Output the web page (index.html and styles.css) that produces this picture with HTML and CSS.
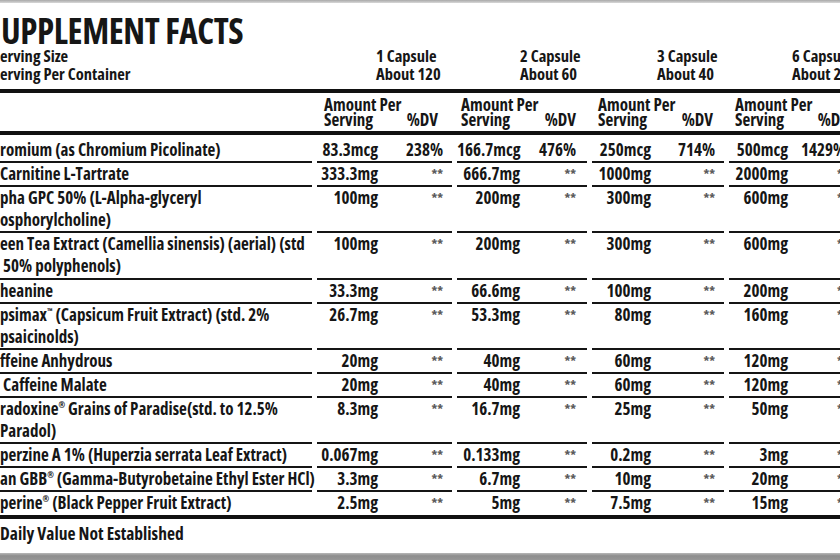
FILE: index.html
```html
<!DOCTYPE html>
<html lang="en">
<head>
<meta charset="utf-8">
<title>Supplement Facts</title>
<link rel="stylesheet" href="styles.css">
</head>
<body>
<div class="band band-top"></div>
<main class="label">
  <h1 class="title">UPPLEMENT FACTS</h1>
  <div class="grid serving">
    <div class="sv-label">erving Size<br>erving Per Container</div>
    <div class="sv-col">1 Capsule<br>About 120</div>
    <div class="sv-col">2 Capsule<br>About 60</div>
    <div class="sv-col">3 Capsule<br>About 40</div>
    <div class="sv-col">6 Capsule<br>About 20</div>
  </div>
  <div class="rule"></div>
  <div class="grid amt-head">
    <div></div>
    <div class="ah"><span>Amount Per<br>Serving</span><span class="ah-dv">%DV</span></div>
    <div class="ah"><span>Amount Per<br>Serving</span><span class="ah-dv">%DV</span></div>
    <div class="ah"><span>Amount Per<br>Serving</span><span class="ah-dv">%DV</span></div>
    <div class="ah"><span>Amount Per<br>Serving</span><span class="ah-dv">%DV</span></div>
  </div>
  <div class="rule"></div>
  <div class="rows">
    <div class="grid row">
      <div class="name">romium (as Chromium Picolinate)</div>
      <div class="grp"><span class="amt">83.3mcg</span><span class="dv">238%</span></div>
      <div class="grp"><span class="amt">166.7mcg</span><span class="dv">476%</span></div>
      <div class="grp"><span class="amt">250mcg</span><span class="dv">714%</span></div>
      <div class="grp"><span class="amt">500mcg</span><span class="dv">1429%</span></div>
    </div>
    <div class="grid row">
      <div class="name">Carnitine L-Tartrate</div>
      <div class="grp"><span class="amt">333.3mg</span><span class="dv na">**</span></div>
      <div class="grp"><span class="amt">666.7mg</span><span class="dv na">**</span></div>
      <div class="grp"><span class="amt">1000mg</span><span class="dv na">**</span></div>
      <div class="grp"><span class="amt">2000mg</span><span class="dv na">**</span></div>
    </div>
    <div class="grid row">
      <div class="name">pha GPC 50% (L-Alpha-glyceryl<br>osphorylcholine)</div>
      <div class="grp"><span class="amt">100mg</span><span class="dv na">**</span></div>
      <div class="grp"><span class="amt">200mg</span><span class="dv na">**</span></div>
      <div class="grp"><span class="amt">300mg</span><span class="dv na">**</span></div>
      <div class="grp"><span class="amt">600mg</span><span class="dv na">**</span></div>
    </div>
    <div class="grid row">
      <div class="name">een Tea Extract (Camellia sinensis) (aerial) (std<br>&nbsp;50% polyphenols)</div>
      <div class="grp"><span class="amt">100mg</span><span class="dv na">**</span></div>
      <div class="grp"><span class="amt">200mg</span><span class="dv na">**</span></div>
      <div class="grp"><span class="amt">300mg</span><span class="dv na">**</span></div>
      <div class="grp"><span class="amt">600mg</span><span class="dv na">**</span></div>
    </div>
    <div class="grid row">
      <div class="name">heanine</div>
      <div class="grp"><span class="amt">33.3mg</span><span class="dv na">**</span></div>
      <div class="grp"><span class="amt">66.6mg</span><span class="dv na">**</span></div>
      <div class="grp"><span class="amt">100mg</span><span class="dv na">**</span></div>
      <div class="grp"><span class="amt">200mg</span><span class="dv na">**</span></div>
    </div>
    <div class="grid row">
      <div class="name">psimax<sup class="tm">™</sup> (Capsicum Fruit Extract) (std. 2%<br>psaicinolds)</div>
      <div class="grp"><span class="amt">26.7mg</span><span class="dv na">**</span></div>
      <div class="grp"><span class="amt">53.3mg</span><span class="dv na">**</span></div>
      <div class="grp"><span class="amt">80mg</span><span class="dv na">**</span></div>
      <div class="grp"><span class="amt">160mg</span><span class="dv na">**</span></div>
    </div>
    <div class="grid row">
      <div class="name">ffeine Anhydrous</div>
      <div class="grp"><span class="amt">20mg</span><span class="dv na">**</span></div>
      <div class="grp"><span class="amt">40mg</span><span class="dv na">**</span></div>
      <div class="grp"><span class="amt">60mg</span><span class="dv na">**</span></div>
      <div class="grp"><span class="amt">120mg</span><span class="dv na">**</span></div>
    </div>
    <div class="grid row">
      <div class="name">&nbsp;Caffeine Malate</div>
      <div class="grp"><span class="amt">20mg</span><span class="dv na">**</span></div>
      <div class="grp"><span class="amt">40mg</span><span class="dv na">**</span></div>
      <div class="grp"><span class="amt">60mg</span><span class="dv na">**</span></div>
      <div class="grp"><span class="amt">120mg</span><span class="dv na">**</span></div>
    </div>
    <div class="grid row">
      <div class="name">radoxine<sup class="reg">®</sup> Grains of Paradise(std. to 12.5%<br>Paradol)</div>
      <div class="grp"><span class="amt">8.3mg</span><span class="dv na">**</span></div>
      <div class="grp"><span class="amt">16.7mg</span><span class="dv na">**</span></div>
      <div class="grp"><span class="amt">25mg</span><span class="dv na">**</span></div>
      <div class="grp"><span class="amt">50mg</span><span class="dv na">**</span></div>
    </div>
    <div class="grid row">
      <div class="name">perzine A 1% (Huperzia serrata Leaf Extract)</div>
      <div class="grp"><span class="amt">0.067mg</span><span class="dv na">**</span></div>
      <div class="grp"><span class="amt">0.133mg</span><span class="dv na">**</span></div>
      <div class="grp"><span class="amt">0.2mg</span><span class="dv na">**</span></div>
      <div class="grp"><span class="amt">3mg</span><span class="dv na">**</span></div>
    </div>
    <div class="grid row">
      <div class="name">an GBB<sup class="reg">®</sup> (Gamma-Butyrobetaine Ethyl Ester HCl)</div>
      <div class="grp"><span class="amt">3.3mg</span><span class="dv na">**</span></div>
      <div class="grp"><span class="amt">6.7mg</span><span class="dv na">**</span></div>
      <div class="grp"><span class="amt">10mg</span><span class="dv na">**</span></div>
      <div class="grp"><span class="amt">20mg</span><span class="dv na">**</span></div>
    </div>
    <div class="grid row row-last">
      <div class="name">perine<sup class="reg">®</sup> (Black Pepper Fruit Extract)</div>
      <div class="grp"><span class="amt">2.5mg</span><span class="dv na">**</span></div>
      <div class="grp"><span class="amt">5mg</span><span class="dv na">**</span></div>
      <div class="grp"><span class="amt">7.5mg</span><span class="dv na">**</span></div>
      <div class="grp"><span class="amt">15mg</span><span class="dv na">**</span></div>
    </div>
  </div>
  <div class="rule"></div>
  <p class="foot">Daily Value Not Established</p>
</main>
<div class="band band-bottom"></div>
</body>
</html>
```

FILE: styles.css
```css
html, body {
  margin: 0;
  padding: 0;
}
body {
  width: 840px;
  height: 560px;
  overflow: hidden;
  background: #fff;
  color: #161616;
  font-family: "Open Sans", "DejaVu Sans Condensed", sans-serif;
  font-stretch: 75%;
  font-weight: bold;
  display: flex;
  flex-direction: column;
}
.band-top {
  height: 3px;
  background: linear-gradient(#a9a9a9, #d8d8d8);
  flex: none;
}
.band-bottom {
  height: 7px;
  background: linear-gradient(#b9b9b9, #8e8e8e 40%, #979797);
  flex: none;
}
.label {
  flex: 1;
  overflow: hidden;
  width: 880px;
}
.title {
  margin: 11px 0 0 1px;
  font-size: 35px;
  line-height: 33px;
  letter-spacing: -0.4px;
  font-weight: bold;
  white-space: nowrap;
}
.grid {
  display: grid;
  grid-template-columns: 312px 135px 130px 132px 140px;
  column-gap: 5px;
}
.serving {
  font-size: 16.5px;
  line-height: 18px;
  white-space: nowrap;
}
.sv-col:nth-child(2) { padding-left: 59px; }
.sv-col:nth-child(3) { padding-left: 63px; }
.sv-col:nth-child(4) { padding-left: 65px; }
.sv-col:nth-child(5) { padding-left: 63px; }
.rule {
  height: 4px;
  background: #111;
  margin-top: 6px;
}
.amt-head {
  font-size: 17px;
  line-height: 15px;
  padding: 3.5px 0 4.5px;
}
.amt-head + .rule { margin-top: 0; }
.ah {
  display: flex;
  justify-content: space-between;
  align-items: flex-end;
  padding: 0 11px 0 6px;
  white-space: nowrap;
}
.ah:nth-child(2) { padding-left: 7px; padding-right: 14px; }
.ah:nth-child(3) { padding-left: 4px; }
.ah:nth-child(5) { padding-right: 20px; }
.rows {
  padding-top: 4px;
  font-size: 17px;
  line-height: 22.1px;
}
.name, .grp {
  border-bottom: 2px solid #151515;
  white-space: nowrap;
}
.row-last .name, .row-last .grp {
  border-bottom: none;
  line-height: 22.5px;
}
.rows + .rule { margin-top: 0; }
.grp {
  display: grid;
  grid-template-columns: 61px 1fr;
  padding-right: 9px;
}
.row .grp:nth-child(3) { grid-template-columns: 63px 1fr; padding-right: 11px; }
.row .grp:nth-child(4) { grid-template-columns: 59px 1fr; }
.row .grp:nth-child(5) { grid-template-columns: 59px 1fr; padding-right: 0; }
.amt, .dv { text-align: right; }
.na {
  color: #5a5a5a;
  font-size: 13px;
}
.row .grp:nth-child(5) .dv { text-align: left; padding-left: 13px; }
.row .grp:nth-child(5) .na { padding-left: 49px; }
.tm, .reg {
  font-size: 8px;
  vertical-align: 7px;
  line-height: 0;
}
.foot {
  margin: 5px 0 0;
  font-size: 17.5px;
  line-height: 18px;
}
```
